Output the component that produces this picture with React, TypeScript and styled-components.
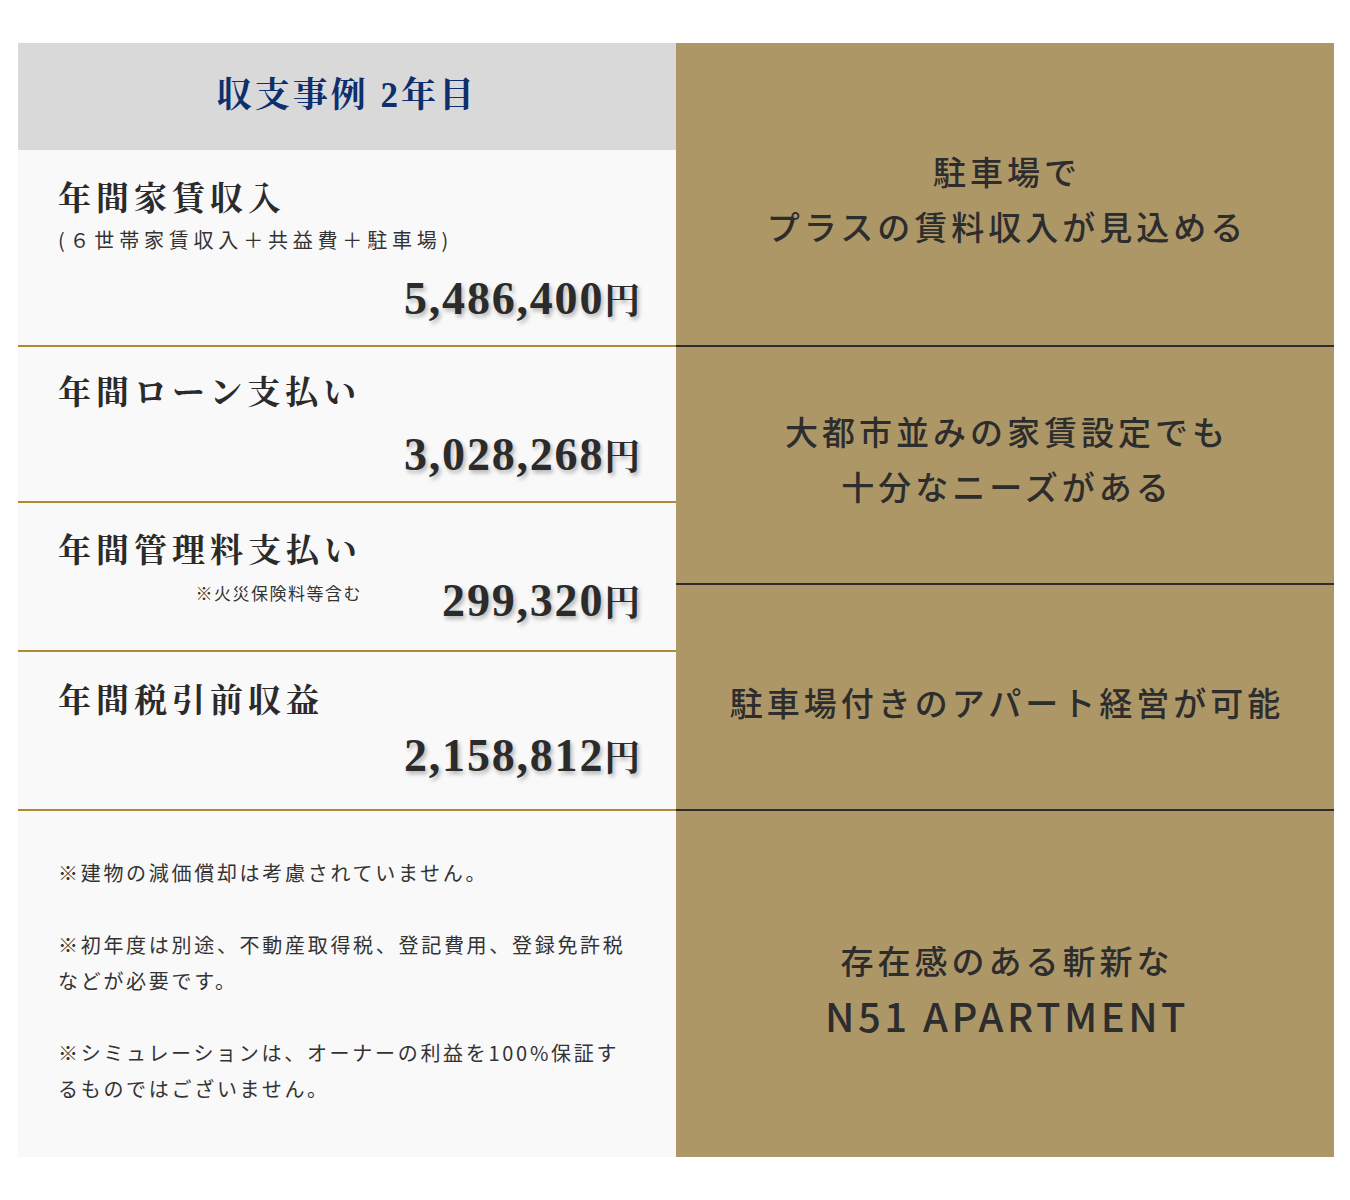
import React from "react";
import styled, { createGlobalStyle } from "styled-components";

const GlobalStyle = createGlobalStyle`
  body {
    margin: 0;
    background: #fff;
    font-family: "Noto Sans CJK JP", "Noto Sans", sans-serif;
    color: #333;
  }
`;

const colors = {
  gold: "#ae9767",
  goldLine: "#b08a30",
  dark: "#2d2d2d",
  cell: "#f9f9f9",
  head: "#d9d9d9",
  navy: "#0d2f6e",
};

const serif = `"Liberation Serif", "Noto Serif CJK JP", "Noto Sans CJK JP", serif`;

// 🔹 Table frame
const Table = styled.div`
  display: grid;
  grid-template-columns: 658px 658px;
  margin: 43px 0 0 18px;
  width: 1316px;
`;

const LeftCol = styled.div`
  display: flex;
  flex-direction: column;
  background: ${colors.cell};
`;

const RightCol = styled.div`
  display: flex;
  flex-direction: column;
  background: ${colors.gold};
`;

const Band = styled.div<{ $h: number }>`
  display: flex;
  flex-direction: column;
  flex: 0 0 ${(p) => p.$h}px;
`;

const Header = styled.div`
  display: flex;
  align-items: center;
  justify-content: center;
  height: 107px;
  padding-bottom: 10px;
  box-sizing: border-box;
  background: ${colors.head};
  h2 {
    margin: 0;
    font-family: ${serif};
    font-size: 35px;
    font-weight: 700;
    letter-spacing: 3px;
    color: ${colors.navy};
  }
`;

const Row = styled.div<{ $pt: number; $pb: number }>`
  display: grid;
  grid-template-columns: max-content 1fr;
  padding: ${(p) => p.$pt}px 34px ${(p) => p.$pb}px 40px;
  border-bottom: 2px solid ${colors.goldLine};
`;

const Title = styled.h3<{ $span?: boolean }>`
  grid-column: ${(p) => (p.$span ? "1 / -1" : "1")};
  margin: 0;
  font-family: ${serif};
  font-size: 33px;
  font-weight: 700;
  line-height: 44px;
  letter-spacing: 5px;
  color: #2b2b2b;
`;

const Sub = styled.p`
  grid-column: 1 / -1;
  margin: 5px 0 0;
  font-size: 20px;
  line-height: 28px;
  letter-spacing: 4.8px;
  color: #333;
`;

const Note = styled.span`
  grid-column: 1;
  justify-self: end;
  align-self: start;
  margin-top: 8px;
  font-size: 17px;
  line-height: 24px;
  color: #333;
  letter-spacing: 1.5px;
`;

const Amount = styled.div<{ $mt: number }>`
  grid-column: 2;
  justify-self: end;
  margin-top: ${(p) => p.$mt}px;
  font-family: ${serif};
  font-size: 46px;
  font-weight: 700;
  line-height: 56px;
  letter-spacing: 1.8px;
  color: #2b2b2b;
  text-shadow: 2px 3px 4px rgba(0, 0, 0, 0.28);
  small {
    font-size: 36px;
    font-family: "Noto Serif CJK JP", "Noto Sans CJK JP", serif;
  }
`;

const Notes = styled.div`
  flex: 1;
  padding: 44px 36px 50px 40px;
  p {
    margin: 0 0 36px;
    font-size: 20px;
    line-height: 36px;
    letter-spacing: 2.7px;
    color: #333;
  }
  p:last-child {
    margin-bottom: 0;
  }
`;

// 🔹 Right column
const Point = styled.div<{ $line?: boolean; $grow?: number; $shift?: number }>`
  flex: ${(p) => p.$grow ?? 1} 1 0;
  display: flex;
  align-items: center;
  justify-content: center;
  padding: ${(p) => Math.max(p.$shift ?? 5, 0) * 2}px 0
    ${(p) => Math.max(-(p.$shift ?? 5), 0) * 2}px 4px;
  border-bottom: ${(p) => (p.$line ? `2px solid ${colors.dark}` : "none")};
  p {
    margin: 0;
    text-align: center;
    font-size: 33px;
    font-weight: 500;
    line-height: 55px;
    letter-spacing: 4px;
    color: #2d2d2d;
  }
`;

const Latin = styled.span`
  font-size: 40px;
  letter-spacing: 3.5px;
`;

const Yen = ({ v }: { v: string }) => (
  <>
    {v}
    <small>円</small>
  </>
);

export default function App() {
  return (
    <>
      <GlobalStyle />
      <Table>
        <LeftCol>
          <Header>
            <h2>収支事例 2年目</h2>
          </Header>
          <Row $pt={27} $pb={18}>
            <Title $span>年間家賃収入</Title>
            <Sub>(６世帯家賃収入＋共益費＋駐車場)</Sub>
            <Amount $mt={17}>
              <Yen v="5,486,400" />
            </Amount>
          </Row>
          <Row $pt={24} $pb={18}>
            <Title $span>年間ローン支払い</Title>
            <Amount $mt={12}>
              <Yen v="3,028,268" />
            </Amount>
          </Row>
          <Row $pt={26} $pb={21}>
            <Title>年間管理料支払い</Title>
            <Note>※火災保険料等含む</Note>
            <Amount $mt={0}>
              <Yen v="299,320" />
            </Amount>
          </Row>
          <Row $pt={27} $pb={25}>
            <Title $span>年間税引前収益</Title>
            <Amount $mt={5}>
              <Yen v="2,158,812" />
            </Amount>
          </Row>
          <Notes>
            <p>※建物の減価償却は考慮されていません。</p>
            <p>※初年度は別途、不動産取得税、登記費用、登録免許税などが必要です。</p>
            <p>※シミュレーションは、オーナーの利益を100%保証するものではございません。</p>
          </Notes>
        </LeftCol>
        <RightCol>
          <Band $h={304}>
            <Point $line>
              <p>
                駐車場で
                <br />
                プラスの賃料収入が見込める
              </p>
            </Point>
          </Band>
          <Band $h={464}>
            <Point $line $grow={238} $shift={-6}>
              <p>
                大都市並みの家賃設定でも
                <br />
                十分なニーズがある
              </p>
            </Point>
            <Point $line $grow={226} $shift={6}>
              <p>駐車場付きのアパート経営が可能</p>
            </Point>
          </Band>
          <Point>
            <p>
              存在感のある斬新な
              <br />
              <Latin>N51 APARTMENT</Latin>
            </p>
          </Point>
        </RightCol>
      </Table>
    </>
  );
}
